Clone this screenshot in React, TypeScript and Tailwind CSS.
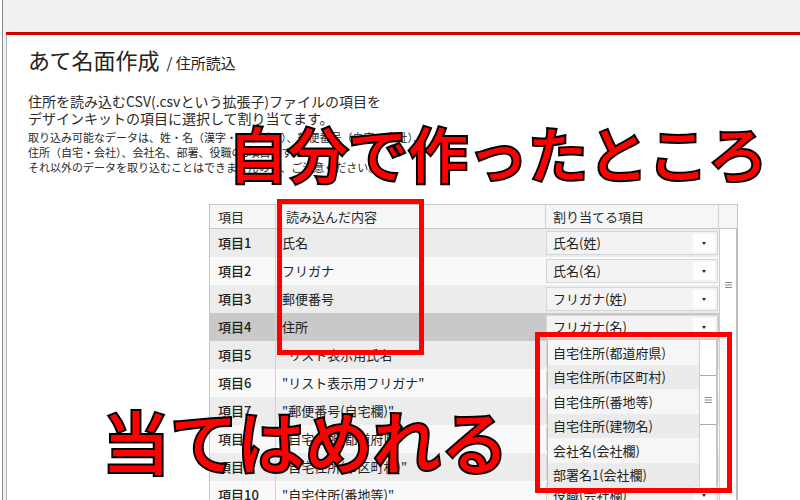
const ROWS = [
  { no: "項目1", src: "氏名", dst: "氏名(姓)" },
  { no: "項目2", src: "フリガナ", dst: "氏名(名)" },
  { no: "項目3", src: "郵便番号", dst: "フリガナ(姓)" },
  { no: "項目4", src: "住所", dst: "フリガナ(名)" },
  { no: "項目5", src: "\"リスト表示用氏名\"", dst: "自宅住所(都道府県)" },
  { no: "項目6", src: "\"リスト表示用フリガナ\"", dst: "自宅住所(市区町村)" },
  { no: "項目7", src: "\"郵便番号(自宅欄)\"", dst: "自宅住所(番地等)" },
  { no: "項目8", src: "\"自宅住所(都道府県)\"", dst: "自宅住所(建物名)" },
  { no: "項目9", src: "\"自宅住所(市区町村)\"", dst: "会社名(会社欄)" },
  { no: "項目10", src: "\"自宅住所(番地等)\"", dst: "役職(会社欄)" },
];

const OPTIONS = [
  "自宅住所(都道府県)",
  "自宅住所(市区町村)",
  "自宅住所(番地等)",
  "自宅住所(建物名)",
  "会社名(会社欄)",
  "部署名1(会社欄)",
];

function Grip() {
  return (
    <svg width="7" height="6" viewBox="0 0 7 6" className="text-[#8a8a8a]">
      <path d="M0 0.5h7M0 3h7M0 5.5h7" stroke="currentColor" strokeWidth="1" />
    </svg>
  );
}

function Select({ value }: { value: string }) {
  return (
    <div className="mt-[2px] flex h-[24px] w-[172px] items-stretch border border-[#d6d6d6] bg-[#f3f3f3]">
      <span className="flex flex-1 items-center pl-[6px] text-[13px] text-[#222]">{value}</span>
      <span className="my-[2px] mr-[2px] flex w-[22px] items-center justify-center bg-white">
        <svg width="4" height="3" viewBox="0 0 4 3">
          <path d="M0 0h4L2 3z" fill="#222" />
        </svg>
      </span>
    </div>
  );
}

export default function App() {
  return (
    <div className="relative flex h-[500px] w-[800px] flex-col overflow-hidden bg-white font-['Noto_Sans_CJK_JP',sans-serif] text-[#2a2a2a]">
      <div className="h-[2px] bg-[#6e6e6e]" />
      <div className="flex flex-1">
        {/* window frame, left edge */}
        <div className="ml-[2px] w-[4px] border-l border-[#8c8c8c] bg-[#efefef]" />
        <div className="flex flex-1 flex-col">
          <div className="h-[32px] bg-[#f1f1f1]" />
          <div className="h-[3px] bg-[#cc0000]" />
          <main className="flex-1 border-l border-[#b4b4b4] pl-[21px] pt-[9px]">
            <h1 className="flex items-baseline text-[22px] leading-[30px] text-[#222]">
              あて名面作成
              <span className="ml-[7px] text-[15px]">/ 住所読込</span>
            </h1>

            <p className="mt-[15px] text-[14px] leading-[17px]">
              住所を読み込むCSV(.csvという拡張子)ファイルの項目を
              <br />
              デザインキットの項目に選択して割り当てます。
            </p>
            <p className="mt-[3px] text-[11px] leading-[15px]">
              取り込み可能なデータは、姓・名（漢字・ふりがな）、郵便番号（自宅・会社）、
              <br />
              住所（自宅・会社）、会社名、部署、役職の6項目です。
              <br />
              それ以外のデータを取り込むことはできませんので、ご注意ください。
            </p>

            {/* mapping table */}
            <div className="ml-[181px] mt-[29px] w-[529px] text-[13px]">
              <div className="flex h-[25px] border border-[#c6c6c6] bg-[#f6f6f6]">
                <div className="flex w-[66px] items-center border-r border-[#d2d2d2] pl-[8px]">項目</div>
                <div className="flex w-[270px] items-center border-r border-[#d2d2d2] pl-[10px]">読み込んだ内容</div>
                <div className="flex w-[173px] items-center border-r border-[#d2d2d2] pl-[7px]">割り当てる項目</div>
                <div className="flex-1" />
              </div>
              <div className="flex">
                <div className="w-[510px] border-l border-[#c6c6c6]">
                  {ROWS.map((r, i) => (
                    <div
                      key={r.no}
                      className={
                        "flex h-[28px] " +
                        (i === 3 ? "bg-[#c9c9c9]" : i % 2 === 0 ? "bg-[#ececec]" : "bg-[#f9f9f9]")
                      }
                    >
                      <div className="flex w-[66px] items-center border-r border-[#d2d2d2] pl-[8px] font-medium text-[#222]">
                        {r.no}
                      </div>
                      <div className="flex w-[270px] items-center pl-[6px] text-[#222]">{r.src}</div>
                      <Select value={r.dst} />
                    </div>
                  ))}
                </div>
                <div className="flex w-[19px] flex-col border-l border-r-2 border-[#cfcfcf] border-r-[#bdbdbd] bg-white">
                  <div className="flex h-[112px] items-center justify-center">
                    <Grip />
                  </div>
                </div>
              </div>
            </div>
          </main>
        </div>
      </div>

      {/* open dropdown list */}
      <div className="absolute left-[547px] top-[340px] flex h-[147px] w-[171px] border-l border-[#bdbdbd] text-[13px] text-[#222]">
        <div className="flex-1">
          {OPTIONS.map((o, i) => (
            <div
              key={o}
              className={
                "flex h-[24.5px] items-center pl-[5px] " + (i % 2 === 0 ? "bg-[#f6f6f6]" : "bg-[#ebebeb]")
              }
            >
              {o}
            </div>
          ))}
        </div>
        <div className="flex w-[19px] flex-col border-l border-r-2 border-[#d0d0d0] border-r-[#c4c4c4] bg-white">
          <div className="mt-[35px] flex h-[50px] items-center justify-center border-y border-[#aaaaaa]">
            <Grip />
          </div>
        </div>
      </div>

      {/* annotations */}
      <div className="absolute left-[277px] top-[199px] h-[156px] w-[147px] border-[5px] border-[#ff0000]" />
      <div className="absolute left-[535px] top-[332px] h-[161px] w-[197px] border-[5px] border-[#ff0000]" />

      <div className="absolute left-[228px] top-[122px] whitespace-nowrap text-[60px] font-medium leading-none text-[#ff0000] [-webkit-text-stroke:4px_#000] [paint-order:stroke_fill]">
        自分で作ったところ
      </div>
      <div className="absolute left-[102px] top-[406px] whitespace-nowrap text-[68px] font-medium leading-none text-[#ff0000] [-webkit-text-stroke:4px_#000] [paint-order:stroke_fill]">
        当てはめれる
      </div>
    </div>
  );
}
